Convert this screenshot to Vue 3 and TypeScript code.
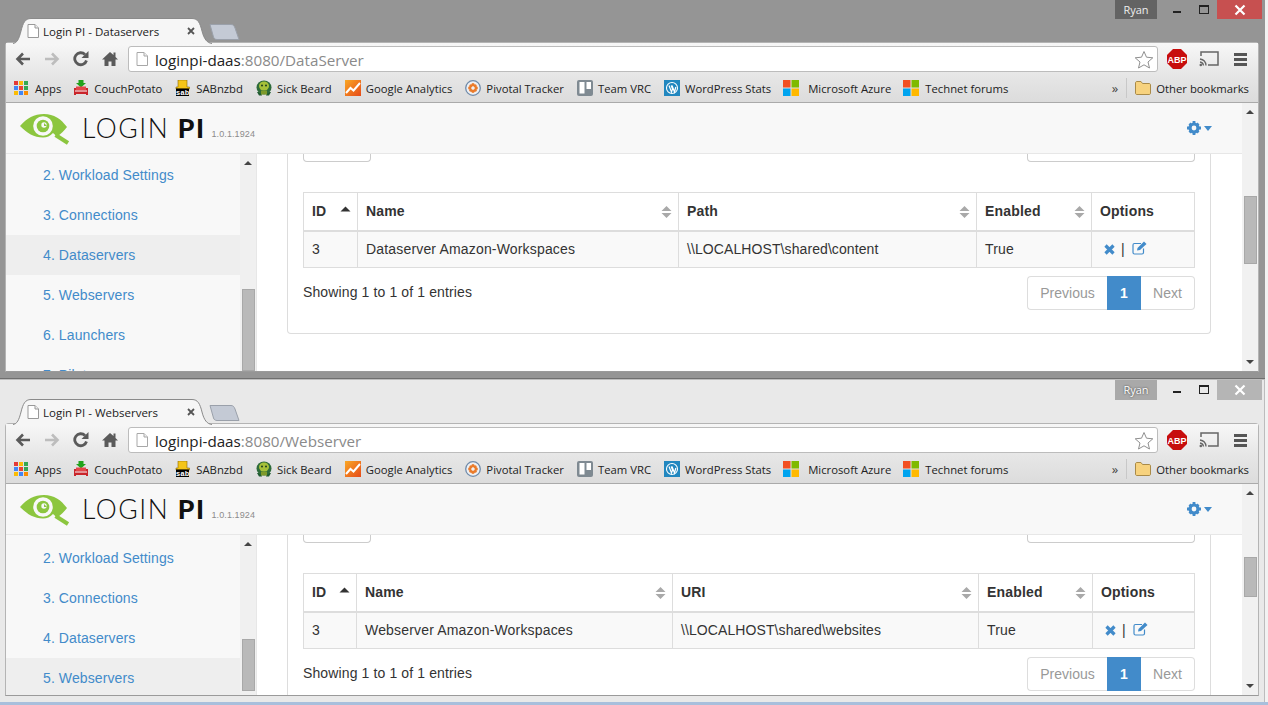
<script setup lang="ts">
interface Cell { label: string; width: number; sort: 'asc' | 'both' | 'none' }
interface Win {
  key: string; title: string; path: string; ryan: string; items: number;
  cols: Cell[]; row: string[]; active: number; sideThumb: number; sideThumbH: number;
  mainThumb: number; mainThumbH: number;
}
const bookmarks = [
  { name: 'Apps', icon: 'apps' },
  { name: 'CouchPotato', icon: 'couch' },
  { name: 'SABnzbd', icon: 'sab' },
  { name: 'Sick Beard', icon: 'turtle' },
  { name: 'Google Analytics', icon: 'ga' },
  { name: 'Pivotal Tracker', icon: 'pivotal' },
  { name: 'Team VRC', icon: 'trello' },
  { name: 'WordPress Stats', icon: 'wp' },
  { name: 'Microsoft Azure', icon: 'ms' },
  { name: 'Technet forums', icon: 'ms' }
]
const appsColors = ['#e53935', '#fbbc05', '#34a853', '#4285f4', '#ea4335', '#34a853', '#fbbc05', '#4285f4', '#fb8c00']
const menu = ['2. Workload Settings', '3. Connections', '4. Dataservers', '5. Webservers', '6. Launchers', '7. Pilots']
const windows: Win[] = [
  {
    key: 'one', title: 'Login PI - Dataservers', path: 'DataServer', ryan: 'Ryan', items: 6,
    cols: [
      { label: 'ID', width: 54, sort: 'asc' }, { label: 'Name', width: 321, sort: 'both' },
      { label: 'Path', width: 298, sort: 'both' }, { label: 'Enabled', width: 115, sort: 'both' },
      { label: 'Options', width: 103, sort: 'none' }
    ],
    row: ['3', 'Dataserver Amazon-Workspaces', '\\\\LOCALHOST\\shared\\content', 'True'],
    active: 2, sideThumb: 135, sideThumbH: 82, mainThumb: 93, mainThumbH: 68
  },
  {
    key: 'two', title: 'Login PI - Webservers', path: 'Webserver', ryan: 'Ryan', items: 4,
    cols: [
      { label: 'ID', width: 53, sort: 'asc' }, { label: 'Name', width: 316, sort: 'both' },
      { label: 'URI', width: 306, sort: 'both' }, { label: 'Enabled', width: 114, sort: 'both' },
      { label: 'Options', width: 102, sort: 'none' }
    ],
    row: ['3', 'Webserver Amazon-Workspaces', '\\\\LOCALHOST\\shared\\websites', 'True'],
    active: 3, sideThumb: 104, sideThumbH: 52, mainThumb: 73, mainThumbH: 40
  }
]
</script>

<template>
  <div class="desk">
    <section v-for="w in windows" :key="w.key" class="win" :class="w.key">
      <div class="titlebar">
        <div class="tabs">
          <div class="tab">
            <svg class="tab-shape" width="199" height="26" viewBox="0 0 199 26">
              <path d="M0 25.500C4 25 6 21 8 13C10 5 12 .5 18 .5H179C185 .5 187 5 189 13C191 21 194 25 199 25.500" fill="#f6f6f6" stroke="#8a8a8a" />
            </svg>
            <svg class="favicon" width="12" height="14" viewBox="0 0 12 14">
              <path d="M1 .5H8L11.500 4V13.500H1Z" fill="#fff" stroke="#999" />
              <path d="M8 .5V4H11.500" fill="#eee" stroke="#999" />
            </svg>
            <span class="tab-title">{{ w.title }}</span>
            <svg class="tab-x" width="8" height="8" viewBox="0 0 8 8"><path d="M1 1L7 7M7 1L1 7" stroke="#555" stroke-width="1.800" /></svg>
          </div>
          <svg class="newtab" width="32" height="16" viewBox="0 0 32 16">
            <path d="M1 .5H22C24 .5 25 1.500 26 4L30 15.500H8C6 15.500 5 14.500 4.500 13Z" fill="#c4cad5" stroke="#9aa0aa" />
          </svg>
        </div>
        <div class="controls">
          <span class="ryan">{{ w.ryan }}</span>
          <span class="ctl"><i class="min"></i></span>
          <span class="ctl"><i class="max"></i></span>
          <span class="close">
            <svg width="12" height="12" viewBox="0 0 12 12"><path d="M1.500 1.500L10.500 10.500M10.500 1.500L1.500 10.500" stroke="#fff" stroke-width="2.200" /></svg>
          </span>
        </div>
      </div>

      <div class="chrome">
        <div class="toolbar">
          <svg class="nav" width="16" height="14" viewBox="0 0 16 14"><path d="M15 7H3M8 1.500L2.500 7L8 12.500" fill="none" stroke="#5a5a5a" stroke-width="2.600" /></svg>
          <svg class="nav" width="16" height="14" viewBox="0 0 16 14"><path d="M1 7H13M8 1.500L13.500 7L8 12.500" fill="none" stroke="#bdbdbd" stroke-width="2.600" /></svg>
          <svg class="nav" width="16" height="16" viewBox="0 0 16 16"><path d="M13.500 9.500A6 6 0 1 1 12 3.500" fill="none" stroke="#5a5a5a" stroke-width="2.800" /><path d="M15.500 0V7H8.500Z" fill="#5a5a5a" /></svg>
          <svg class="nav" width="16" height="16" viewBox="0 0 16 16"><path d="M8 1L0 8.500H2.500V15H6.500V10.500H9.500V15H13.500V8.500H16L13.500 6V1.500H11.500V4Z" fill="#5a5a5a" /></svg>
          <div class="omnibox">
            <svg width="12" height="14" viewBox="0 0 12 14" class="omni-page">
              <path d="M1 .5H8L11.500 4V13.500H1Z" fill="#fff" stroke="#a8a8a8" />
              <path d="M8 .5V4H11.500" fill="#eee" stroke="#a8a8a8" />
            </svg>
            <span class="url"><b>loginpi-daas</b>:8080/{{ w.path }}</span>
            <svg class="star" width="20" height="19" viewBox="0 0 20 19"><path d="M10 1.500L12.500 7.200L18.800 7.800L14 12L15.500 18L10 14.800L4.500 18L6 12L1.200 7.800L7.500 7.200Z" fill="#fff" stroke="#8f8f8f" /></svg>
          </div>
          <svg class="abp" width="20" height="20" viewBox="0 0 20 20">
            <path d="M6 0H14L20 6V14L14 20H6L0 14V6Z" fill="#c70d0c" />
            <text x="10" y="13.500" text-anchor="middle" fill="#fff" font-size="9" font-weight="700" font-family="Liberation Sans, sans-serif">ABP</text>
          </svg>
          <svg class="cast" width="20" height="16" viewBox="0 0 20 16">
            <path d="M2 5V1H19V14H9" fill="none" stroke="#666" stroke-width="1.500" />
            <path d="M1 8A7 7 0 0 1 7 14.500M1 11A4 4 0 0 1 4.500 14.500" fill="none" stroke="#666" stroke-width="1.300" />
            <circle cx="1.800" cy="14" r="1.300" fill="#666" />
          </svg>
          <span class="hamburger"><i></i><i></i><i></i></span>
        </div>

        <div class="bookmarks">
          <div v-for="b in bookmarks" :key="b.name" class="bm" :class="'bm-' + b.icon">
            <span v-if="b.icon === 'apps'" class="apps-grid"><i v-for="(c, i) in appsColors" :key="i" :style="{ background: c }"></i></span>
            <svg v-else-if="b.icon === 'couch'" width="16" height="16" viewBox="0 0 16 16">
              <path d="M5.500 0H10.500V3H13L8 7.500L3 3H5.500Z" fill="#22a31c" />
              <path d="M1 8H15V15H13V14H3V15H1Z" fill="#c9252b" />
              <path d="M3 6.500H13V10H3Z" fill="#e2474a" />
              <path d="M2 11H14" stroke="#fff" />
            </svg>
            <svg v-else-if="b.icon === 'sab'" width="16" height="16" viewBox="0 0 16 16">
              <path d="M3 0H12V7H14.500V9H1V7H3Z" fill="#f5c518" stroke="#8a6a00" stroke-width=".6" />
              <rect x="1" y="8.500" width="13" height="7.500" fill="#000" />
              <text x="7.500" y="15" text-anchor="middle" fill="#fff" font-size="7.500" font-family="Liberation Mono, monospace" font-weight="700">sab</text>
            </svg>
            <svg v-else-if="b.icon === 'turtle'" width="16" height="16" viewBox="0 0 16 16">
              <path d="M1 12L3 15.500H6L5 12ZM15 12L13 15.500H10L11 12Z" fill="#1f5a30" />
              <ellipse cx="8" cy="7.500" rx="7.500" ry="7" fill="#2e6b3a" />
              <ellipse cx="8" cy="6" rx="5" ry="4.500" fill="#a6c13a" />
              <path d="M5 10.500H11V14.500H5Z" fill="#7d9a2a" />
              <circle cx="6" cy="5.500" r="1" fill="#1c3d20" />
              <circle cx="10" cy="5.500" r="1" fill="#1c3d20" />
            </svg>
            <svg v-else-if="b.icon === 'ga'" width="16" height="16" viewBox="0 0 16 16">
              <defs><linearGradient id="gaGrad" x1="0" y1="0" x2="1" y2="1"><stop offset="0" stop-color="#f9a825" /><stop offset="1" stop-color="#e64a19" /></linearGradient></defs>
              <rect width="16" height="16" fill="url(#gaGrad)" />
              <path d="M1 13L5.500 8L8.500 10.500L15 3" fill="none" stroke="#fff" stroke-width="2" />
            </svg>
            <svg v-else-if="b.icon === 'pivotal'" width="16" height="16" viewBox="0 0 16 16">
              <circle cx="8" cy="8" r="7.300" fill="#eef0f3" stroke="#6f8bab" stroke-width="1.300" />
              <g fill="#ea7b2b">
                <circle cx="8" cy="4.800" r="1.700" /><circle cx="8" cy="11.200" r="1.700" />
                <circle cx="4.800" cy="8" r="1.700" /><circle cx="11.200" cy="8" r="1.700" />
                <circle cx="5.800" cy="5.800" r="1.500" /><circle cx="10.200" cy="5.800" r="1.500" />
                <circle cx="5.800" cy="10.200" r="1.500" /><circle cx="10.200" cy="10.200" r="1.500" />
              </g>
            </svg>
            <svg v-else-if="b.icon === 'trello'" width="16" height="16" viewBox="0 0 16 16">
              <rect width="16" height="16" rx="2" fill="#7f8a92" />
              <rect x="2.500" y="2" width="5" height="11.500" fill="#fff" />
              <rect x="9.500" y="2" width="4.500" height="7" fill="#fff" />
            </svg>
            <svg v-else-if="b.icon === 'wp'" width="16" height="16" viewBox="0 0 16 16">
              <rect width="16" height="16" fill="#2187bf" />
              <circle cx="8" cy="8" r="5.500" fill="none" stroke="#fff" stroke-width="1.100" />
              <path d="M5 5.500L7.500 12L8.500 9L7.200 5.500M8 5.500L10.500 12L11.800 7" fill="none" stroke="#fff" stroke-width="1.200" />
            </svg>
            <svg v-else-if="b.icon === 'ms'" width="16" height="16" viewBox="0 0 16 16">
              <rect width="7.500" height="7.500" fill="#f25022" /><rect x="8.500" width="7.500" height="7.500" fill="#7fba00" />
              <rect y="8.500" width="7.500" height="7.500" fill="#00a4ef" /><rect x="8.500" y="8.500" width="7.500" height="7.500" fill="#ffb900" />
            </svg>
            <span class="bm-text">{{ b.name }}</span>
          </div>
          <span class="chev">»</span>
          <span class="sep"></span>
          <svg class="folder" width="16" height="14" viewBox="0 0 16 14">
            <path d="M.5 2C.5 1 1 .5 2 .5H6L7.500 2.500H14C15 2.500 15.500 3 15.500 4V12C15.500 13 15 13.500 14 13.500H2C1 13.500 .5 13 .5 12Z" fill="#f7d27e" stroke="#a98a48" />
          </svg>
          <span class="bm-text">Other bookmarks</span>
        </div>

        <div class="page">
          <div class="page-main">
            <header class="brand">
              <svg class="eye" width="50" height="32" viewBox="0 0 50 32">
                <path d="M0 13C7 5 14 1 24 1C34 1 41 6 47 14C44 18 41 21 37 23.500L33 20C30 23 27 24.500 23 24.500C14 24.500 7 20 0 13Z" fill="#8cc63f" />
                <circle cx="23" cy="13" r="9.800" fill="#f8f8f8" />
                <circle cx="23" cy="13" r="6.300" fill="#8cc63f" />
                <circle cx="24" cy="12" r="2.700" fill="#f8f8f8" />
                <path d="M27 13H24V10" fill="#8cc63f" />
                <path d="M35.500 22L48 30" stroke="#8cc63f" stroke-width="4" />
              </svg>
              <span class="wordmark">LOGIN <b>PI</b></span>
              <span class="version">1.0.1.1924</span>
              <span class="gear-wrap">
                <svg width="14" height="14" viewBox="0 0 14 14">
                  <circle cx="7" cy="7" r="4" fill="none" stroke="#428bca" stroke-width="3.200" />
                  <path d="M5.600 0H8.400V3H5.600ZM5.600 11H8.400V14H5.600ZM0 5.600H3V8.400H0ZM11 5.600H14V8.400H11ZM1.500 3.500L3.500 1.500L5 3.500L3.500 5ZM12.500 3.500L10.500 1.500L9 3.500L10.500 5ZM1.500 10.500L3.500 12.500L5 10.500L3.500 9ZM12.500 10.500L10.500 12.500L9 10.500L10.500 9Z" fill="#428bca" />
                </svg>
                <i class="caret"></i>
              </span>
            </header>
            <div class="columns">
              <nav class="side">
                <a v-for="(m, i) in menu.slice(0, w.items)" :key="m" class="side-item" :class="{ active: i === w.active }">{{ m }}</a>
              </nav>
              <div class="sb sb-side">
                <i class="arr up"></i>
                <i class="thumb" :style="{ marginTop: w.sideThumb + 'px', height: w.sideThumbH + 'px' }"></i>
              </div>
              <main class="main">
                <div class="panel">
                  <div class="stubs"><span class="stub-btn"></span><span class="stub-input"></span></div>
                  <table class="grid">
                    <colgroup><col v-for="c in w.cols" :key="c.label" :style="{ width: c.width + 'px' }" /></colgroup>
                    <thead>
                      <tr>
                        <th v-for="c in w.cols" :key="c.label">
                          {{ c.label }}
                          <svg v-if="c.sort === 'both'" class="sort" width="11" height="14" viewBox="0 0 11 14"><path d="M5.500 1L10.500 6H.5ZM5.500 13L.5 8H10.500Z" fill="#a9a9a9" /></svg>
                          <svg v-else-if="c.sort === 'asc'" class="sort asc" width="11" height="6" viewBox="0 0 11 6"><path d="M5.500 .5L10.500 5.500H.5Z" fill="#333" /></svg>
                        </th>
                      </tr>
                    </thead>
                    <tbody>
                      <tr>
                        <td v-for="(v, i) in w.row" :key="i">{{ v }}</td>
                        <td class="opts">
                          <svg width="11" height="11" viewBox="0 0 11 11"><path d="M1.500 1.500L9.500 9.500M9.500 1.500L1.500 9.500" stroke="#428bca" stroke-width="3.200" /></svg>
                          <span class="pipe">|</span>
                          <svg width="15" height="14" viewBox="0 0 15 14">
                            <path d="M9 2.500H2.500C1.500 2.500 1 3 1 4V11.500C1 12.500 1.500 13 2.500 13H10C11 13 11.500 12.500 11.500 11.500V7.500" fill="none" stroke="#428bca" stroke-width="1.200" />
                            <path d="M5 9.500L5.500 7L12 .5L14.500 3L8 9Z" fill="#428bca" />
                          </svg>
                        </td>
                      </tr>
                    </tbody>
                  </table>
                  <div class="foot">
                    <span class="info">Showing 1 to 1 of 1 entries</span>
                    <div class="pager"><span class="pg prev">Previous</span><span class="pg cur">1</span><span class="pg next">Next</span></div>
                  </div>
                </div>
              </main>
            </div>
          </div>
          <div class="sb sb-main">
            <i class="arr up"></i>
            <i class="thumb" :style="{ marginTop: w.mainThumb + 'px', height: w.mainThumbH + 'px' }"></i>
            <i class="arr down"></i>
          </div>
        </div>
      </div>
    </section>
    <div class="taskbar"></div>
  </div>
</template>

<style>
html, body { margin: 0; background: #f2f2f2; }
</style>

<style scoped>
.desk { width: 1268px; height: 705px; overflow: hidden; display: flex; flex-direction: column; font-family: "Liberation Sans", Arial, sans-serif; font-size: 14px; color: #333; }
.win { width: 1265px; box-sizing: border-box; padding: 0 6px 0 5px; flex: none; display: flex; flex-direction: column; }
.one { height: 379px; background: #959595; border-bottom: 1px solid #6f6f6f; padding-bottom: 6px; }
.two { height: 323px; background: #e9e9e9; border-top: 1px solid #bdbdbd; border-right: 1px solid #bcbcbd; padding: 0 5px 6px 5px; }
.taskbar { height: 3px; background: #a8bfdc; flex: none; }

.titlebar { position: relative; flex: none; display: flex; justify-content: space-between; }
.one .titlebar { height: 42px; }
.two .titlebar { height: 43px; }
.tabs { display: flex; align-items: flex-end; padding-left: 8px; position: relative; z-index: 2; }
.tab { position: relative; width: 199px; height: 26px; margin-bottom: -2px; display: flex; align-items: center; padding-left: 14px; box-sizing: border-box; }
.tab-shape { position: absolute; left: 0; top: 0; }
.favicon { position: relative; margin-right: 4px; }
.tab-title { position: relative; font: 11.500px "Open Sans", sans-serif; color: #222; width: 144px; white-space: nowrap; }
.tab-x { position: relative; margin-left: 0; }
.newtab { margin: 0 0 2px -3px; }
.controls { display: flex; align-items: flex-start; margin-right: -3px; }
.ryan { width: 42px; height: 19px; background: #636363; color: #eee; font: 11px/19px "Open Sans", sans-serif; text-align: center; margin-right: 6px; }
.two .ryan { height: 20px; background: #a9a9a9; color: #fff; text-shadow: 0 0 2px #333; }
.ctl { width: 27px; height: 19px; display: flex; align-items: center; justify-content: center; }
.min { width: 8px; height: 2px; background: #222; margin-top: 5px; }
.max { width: 8px; height: 6px; border: 1px solid #222; border-top-width: 2px; }
.close { width: 45px; height: 19px; background: #c75050; display: flex; align-items: center; justify-content: center; }
.two .close { background: #b5b5b5; height: 20px; }

.chrome { flex: 1; min-height: 0; display: flex; flex-direction: column; background: #f0f0f0; border: 1px solid #b4b4b4; border-bottom-color: #9a9a9a; border-radius: 4px 4px 0 0; box-sizing: border-box; }
.toolbar { flex: none; height: 32px; display: flex; align-items: center; padding-left: 9px; background: linear-gradient(#f7f7f7, #e6e6e6); }
.nav { margin-right: 13px; }
.omnibox { margin-left: -3px; width: 1030px; height: 26px; box-sizing: border-box; background: #fff; border: 1px solid #bcbcbc; border-radius: 3px; display: flex; align-items: center; padding-left: 7px; margin-right: 9px; }
.omni-page { margin-right: 7px; }
.url { font: 15.200px "Open Sans", sans-serif; color: #8a8a8a; flex: 1; white-space: nowrap; padding-top: 1px; }
.url b { font-weight: 400; color: #222; }
.star { margin-right: 3px; }
.abp { margin-right: 12px; }
.cast { margin-right: 15px; }
.hamburger { width: 13px; display: flex; flex-direction: column; gap: 2px; }
.hamburger i { height: 3px; background: #555; display: block; }

.bookmarks { flex: none; height: 28px; display: flex; align-items: center; padding: 0 0 1px 8px; background: linear-gradient(#e6e6e6, #dcdcdc); border-bottom: 1px solid #aaa; box-sizing: border-box; font: 11.300px "Open Sans", sans-serif; color: #222; }
.bm { display: flex; align-items: center; margin-right: 13px; gap: 5px; white-space: nowrap; }
.bm-text { white-space: nowrap; }
.bm-wp { margin-right: 12px; }
.bm-ms { gap: 9px; margin-right: 12px; }
.bm-ms:last-of-type { gap: 6px; }
.bm-apps { margin-right: 12px; }
.apps-grid { width: 14px; height: 14px; display: grid; grid-template-columns: repeat(3, 4px); gap: 1px; margin-right: 2px; }
.apps-grid i { display: block; width: 4px; height: 4px; }
.chev { margin-left: auto; margin-right: 8px; color: #444; font-size: 13px; }
.sep { width: 1px; height: 20px; background: #c8c8c8; margin-right: 8px; }
.folder { margin-right: 5px; }
.bookmarks > .bm-text { margin-right: 9px; }

.page { flex: 1; min-height: 0; display: flex; background: #fff; overflow: hidden; }
.page-main { flex: 1; min-width: 0; display: flex; flex-direction: column; }
.brand { flex: none; height: 51px; box-sizing: border-box; background: #f8f8f8; border-bottom: 1px solid #e7e7e7; display: flex; align-items: center; padding-left: 14px; }
.eye { margin: 2px 12px 0 0; }
.wordmark { font: 300 26.500px "Lato", sans-serif; color: #111; letter-spacing: 1.500px; white-space: nowrap; }
.wordmark b { font-weight: 900; }
.version { font-size: 9px; color: #8c8c8c; margin: 11px 0 0 6px; letter-spacing: .1px; }
.gear-wrap { margin-left: auto; margin-right: 30px; display: flex; align-items: center; gap: 3px; }
.caret { width: 0; height: 0; border-left: 4.500px solid transparent; border-right: 4.500px solid transparent; border-top: 5px solid #428bca; }
.columns { flex: 1; min-height: 0; display: flex; overflow: hidden; }
.side { width: 234px; flex: none; background: #f8f8f8; display: flex; flex-direction: column; overflow: hidden; letter-spacing: .1px; }
.one .side { padding-top: 1px; }
.two .side { padding-top: 3px; }
.side-item { flex: none; height: 40px; line-height: 40px; padding-left: 37px; color: #428bca; }
.side-item.active { background: #eee; }
.sb { width: 16px; flex: none; background: #f0f0f0; display: flex; flex-direction: column; align-items: center; position: relative; }
.sb-side { border-right: 1px solid #e7e7e7; }
.sb-main { background: #f1f1f1; }
.thumb { display: block; width: 13px; background: #b9b9b9; border: 1px solid #a8a8a8; box-sizing: border-box; flex: none; }
.arr { position: absolute; left: 4px; width: 0; height: 0; border-left: 4px solid transparent; border-right: 4px solid transparent; }
.arr.up { top: 7px; border-bottom: 4px solid #444; }
.arr.down { bottom: 7px; border-top: 4px solid #444; }
.main { flex: 1; min-width: 0; padding: 0 31px 0 30px; overflow: hidden; background: #fff; }
.panel { border: 1px solid #ddd; border-top: 0; border-radius: 0 0 4px 4px; padding: 0 15px 23px; }
.stubs { display: flex; justify-content: space-between; height: 8px; margin-bottom: 30px; }
.stub-btn { width: 68px; height: 8px; box-sizing: border-box; border: 1px solid #ccc; border-top: 0; border-radius: 0 0 4px 4px; }
.stub-input { width: 168px; height: 8px; box-sizing: border-box; border: 1px solid #ccc; border-top: 0; border-radius: 0 0 4px 4px; }
.grid { width: 891px; border-collapse: collapse; table-layout: fixed; letter-spacing: .17px; }
.grid th, .grid td { border: 1px solid #ddd; padding: 0 8px; text-align: left; box-sizing: border-box; white-space: nowrap; }
.grid th { height: 38px; border-bottom-width: 2px; font-weight: 700; position: relative; }
.grid td { height: 37px; background: #f9f9f9; }
.grid td:nth-child(3) { letter-spacing: .09px; }
.sort { position: absolute; right: 6px; top: 12px; }
.sort.asc { top: 13px; right: 6px; }
.opts { padding-left: 12px !important; }
.opts svg { vertical-align: -1px; }
.pipe { margin: 0 7px 0 6px; }
.foot { display: flex; justify-content: space-between; margin-top: 8px; }
.info { padding-top: 8px; line-height: 17px; letter-spacing: .12px; }
.pager { display: flex; height: 34px; line-height: 32px; }
.pg { box-sizing: border-box; border: 1px solid #ddd; color: #999; text-align: center; }
.prev { width: 80px; border-radius: 4px 0 0 4px; border-right: 0; }
.cur { width: 34px; background: #428bca; border-color: #428bca; color: #fff; font-weight: 700; }
.next { width: 54px; border-radius: 0 4px 4px 0; border-left: 0; }
</style>
